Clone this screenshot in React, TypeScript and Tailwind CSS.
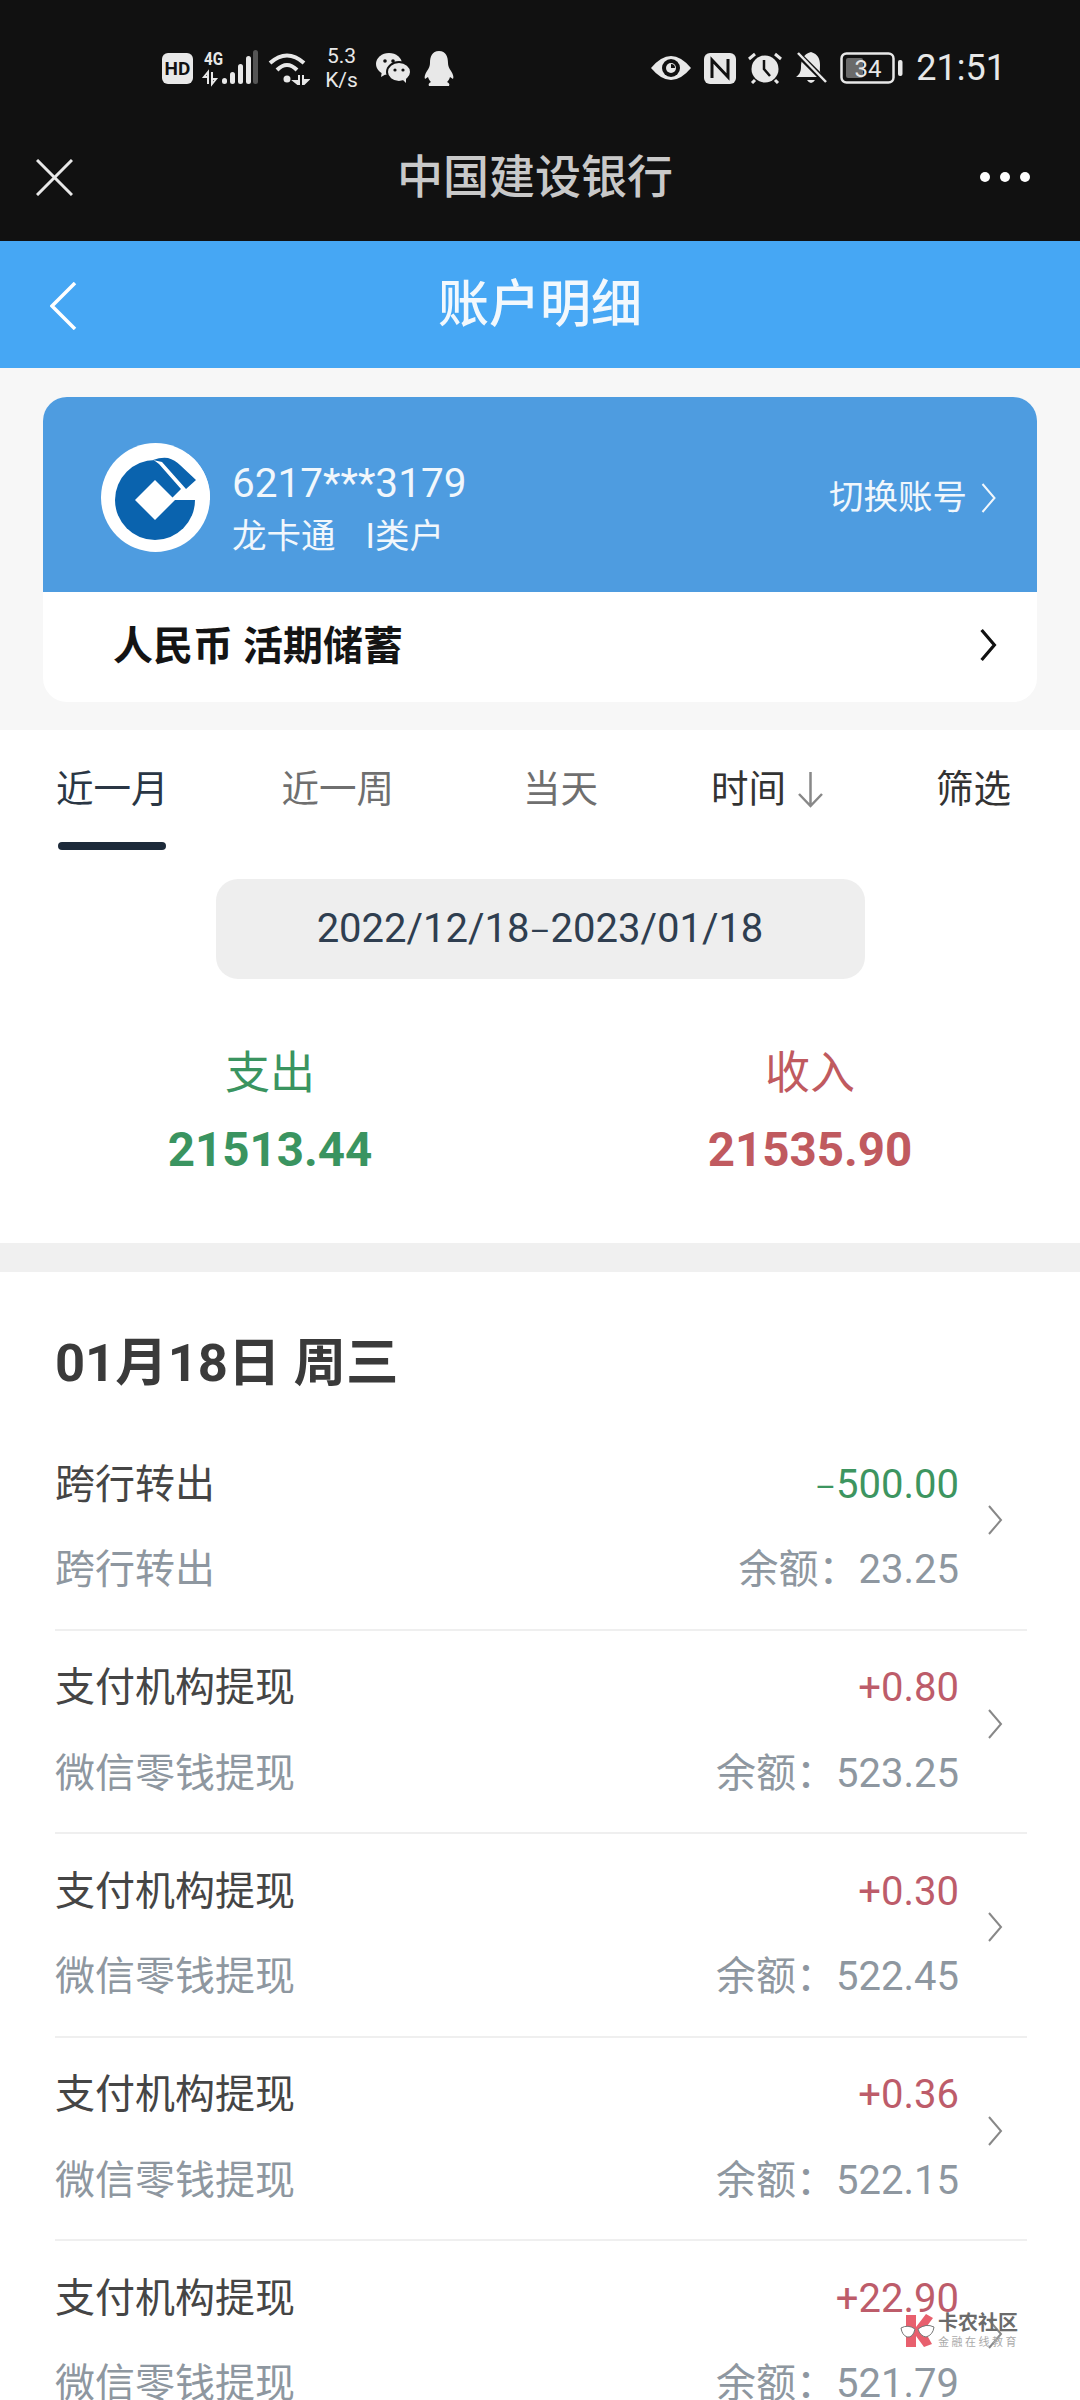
const FONT = "font-['Roboto','Noto_Sans_CJK_SC',sans-serif]"

type Row = { title: string; sub: string; amount: string; balance: string; out?: boolean }

const ROWS: Row[] = [
  { title: '跨行转出', sub: '跨行转出', amount: '500.00', balance: '23.25', out: true },
  { title: '支付机构提现', sub: '微信零钱提现', amount: '+0.80', balance: '523.25' },
  { title: '支付机构提现', sub: '微信零钱提现', amount: '+0.30', balance: '522.45' },
  { title: '支付机构提现', sub: '微信零钱提现', amount: '+0.36', balance: '522.15' },
  { title: '支付机构提现', sub: '微信零钱提现', amount: '+22.90', balance: '521.79' },
]

function Chevron({ className, stroke = '#888', width = 2 }: { className: string; stroke?: string; width?: number }) {
  return (
    <svg className={className} viewBox="0 0 16 30" fill="none">
      <path d="M2 1 L14 15 L2 29" stroke={stroke} strokeWidth={width} />
    </svg>
  )
}

function CcbLogo() {
  return (
    <svg className="w-[109px] h-[109px] shrink-0 mt-[6px]" viewBox="0 0 109 109">
      <defs>
        <clipPath id="ccb">
          <circle cx="54.5" cy="54.5" r="54.5" />
        </clipPath>
      </defs>
      <circle cx="54.5" cy="54.5" r="54.5" fill="#fff" />
      <circle cx="54" cy="57" r="40" fill="#0a63ae" />
      <path d="M46 12 L58 21 L80 46 L69 57 L110 57 L110 10 Z" fill="#fff" clipPath="url(#ccb)" />
      <path d="M52 17 Q60 14 67 15 Q74 17 79 22 L95 37 L85 46 L61 19 Z" fill="#0a63ae" />
      <path d="M54 37 L74 57 L54 77 L34 57 Z" fill="#fff" />
    </svg>
  )
}

function StatusLeft() {
  return (
    <div className="flex items-center text-[#e8e8e8]">
      <svg className="w-[31px] h-[31px]" viewBox="0 0 31 31">
        <rect width="31" height="31" rx="6" fill="#e8e8e8" />
        <text x="15.5" y="22" textAnchor="middle" fontSize="19" fontWeight="700" fontFamily="Roboto" fill="#111">HD</text>
      </svg>
      <svg className="w-[54px] h-[36px] ml-[11px] overflow-visible" viewBox="0 0 54 36" fill="#e8e8e8">
        <text x="0" y="15" fontSize="18" fontWeight="700" fontFamily="Roboto" textLength="19" lengthAdjust="spacingAndGlyphs">4G</text>
        <path d="M4 34 V22 L0 27 H3 M8 22 V34 L12 29 H9" stroke="#e8e8e8" strokeWidth="2" fill="none" />
        <rect x="18" y="28" width="5" height="6" rx="2.5" />
        <rect x="26" y="22" width="5" height="12" rx="2.5" />
        <rect x="34" y="14" width="5" height="20" rx="2.5" />
        <rect x="42" y="6" width="5" height="28" rx="2.5" />
        <rect x="49" y="0" width="5" height="34" rx="2.5" fill="#555" />
      </svg>
      <svg className="w-[42px] h-[34px] ml-[10px]" viewBox="0 0 42 34" fill="none" stroke="#e8e8e8" strokeWidth="4">
        <path d="M2 12 Q19 -3 36 12" />
        <path d="M9 19 Q19 9 29 19" />
        <circle cx="19" cy="28" r="3.5" fill="#e8e8e8" stroke="none" />
        <path d="M31 24 V34 L26 30 H31 M35 24 V34 L40 29 H35" strokeWidth="2" fill="#e8e8e8" />
      </svg>
      <div className="ml-[13px] w-[37px] flex flex-col items-center text-[21px] leading-[24px]">
        <span>5.3</span>
        <span>K/s</span>
      </div>
      <svg className="w-[34px] h-[30px] ml-[16px]" viewBox="0 0 34 30">
        <ellipse cx="13" cy="11" rx="13" ry="11" fill="#e8e8e8" />
        <path d="M6 18 L5 24 L12 20 Z" fill="#e8e8e8" />
        <circle cx="9" cy="8" r="1.8" fill="#111" />
        <circle cx="17" cy="8" r="1.8" fill="#111" />
        <ellipse cx="23" cy="19" rx="12" ry="10" fill="#e8e8e8" stroke="#111" strokeWidth="2" />
        <path d="M27 27 L30 30 L30 25 Z" fill="#e8e8e8" />
        <circle cx="19" cy="17" r="1.6" fill="#111" />
        <circle cx="27" cy="17" r="1.6" fill="#111" />
      </svg>
      <svg className="w-[30px] h-[35px] ml-[14px]" viewBox="0 0 30 35" fill="#e8e8e8">
        <path d="M15 0 C8 0 6 6 6 12 C6 15 5 17 3 20 C1 23 0 26 1 28 L4 26 C5 29 6 30 7 31 C5 32 4 33 5 35 H25 C26 33 25 32 23 31 C24 30 25 29 26 26 L29 28 C30 26 29 23 27 20 C25 17 24 15 24 12 C24 6 22 0 15 0 Z" />
      </svg>
    </div>
  )
}

function StatusRight() {
  return (
    <div className="flex items-center text-[#e8e8e8]">
      <svg className="w-[42px] h-[28px]" viewBox="0 0 42 28">
        <path d="M1 14 Q21 -10 41 14 Q21 38 1 14 Z" fill="#e8e8e8" />
        <circle cx="21" cy="14" r="9" fill="#111" />
        <circle cx="21" cy="14" r="5" fill="#e8e8e8" />
        <path d="M21 10 a4 4 0 0 1 4 4 h-4 Z" fill="#111" />
      </svg>
      <svg className="w-[32px] h-[31px] ml-[12px]" viewBox="0 0 32 31">
        <rect width="32" height="31" rx="6" fill="#e8e8e8" />
        <path d="M8 25 V7 L24 24 V6" fill="none" stroke="#111" strokeWidth="3" />
      </svg>
      <svg className="w-[36px] h-[32px] ml-[11px]" viewBox="0 0 36 32">
        <circle cx="18" cy="17" r="13.5" fill="#e8e8e8" />
        <path d="M17 8 V17 L23 24" fill="none" stroke="#111" strokeWidth="2.5" />
        <path d="M2 7 L8 2 M34 7 L28 2 M8 28 L5 31 M28 28 L31 31" stroke="#e8e8e8" strokeWidth="3" />
      </svg>
      <svg className="w-[33px] h-[34px] ml-[12px]" viewBox="0 0 33 34">
        <path d="M16 1 C8 3 6 10 6 16 C6 21 4 24 1 26 H28 C24 22 25 18 25 14 C25 8 23 3 16 1 Z" fill="#e8e8e8" />
        <path d="M12 29 H20 Q16 35 12 29 Z" fill="#e8e8e8" />
        <path d="M3 3 L30 30" stroke="#111" strokeWidth="6" />
        <path d="M3 2 L31 31" stroke="#e8e8e8" strokeWidth="2.5" />
      </svg>
      <svg className="w-[63px] h-[32px] ml-[12px]" viewBox="0 0 63 32">
        <rect x="1.5" y="1.5" width="52" height="29" rx="5" fill="none" stroke="#e8e8e8" strokeWidth="2.5" />
        <rect x="6" y="6" width="17" height="20" rx="2" fill="#6a6a6a" />
        <text x="28" y="25" textAnchor="middle" fontSize="24" fontFamily="Roboto" fill="#e8e8e8">34</text>
        <rect x="58" y="8" width="4.5" height="16" rx="2" fill="#e8e8e8" />
      </svg>
      <span className="ml-[13px] text-[36px] leading-none">21:51</span>
    </div>
  )
}

function TxRow({ row }: { row: Row }) {
  return (
    <div className="relative h-[203.5px] mr-[53px] border-b-2 border-[#efefef] last:border-b-0">
      <div className="flex justify-between items-center pr-[68px] pt-[37px] h-[78px]">
        <span className="text-[40px] leading-none text-[#454545]">{row.title}</span>
        <span className={`text-[40px] leading-none ${row.out ? 'text-[#3d9560]' : 'text-[#bd5c6a]'}`}>
          {row.out && <span className="text-[32px]">–</span>}
          {row.amount}
        </span>
      </div>
      <div className="flex justify-between items-center pr-[68px] pt-[46px] h-[84px] text-[#8e97a0]">
        <span className="text-[40px] leading-none">{row.sub}</span>
        <span className="text-[40px] leading-none">余额：{row.balance}</span>
      </div>
      <Chevron className="absolute right-[24px] top-[78px] w-[16px] h-[30px]" />
    </div>
  )
}

export default function App() {
  return (
    <div className={`relative w-[1080px] h-[2400px] overflow-hidden bg-white ${FONT}`}>
      <div className="bg-[#111111] h-[241px]">
        <div className="flex items-center justify-between h-[136px] pl-[162px] pr-[74px]">
          <StatusLeft />
          <StatusRight />
        </div>
        <div className="relative flex items-center justify-center h-[82px] pr-[10px]">
          <svg className="absolute left-[36px] top-[23px] w-[37px] h-[37px]" viewBox="0 0 37 37">
            <path d="M1 1 L36 36 M36 1 L1 36" stroke="#e8e8e8" strokeWidth="3" />
          </svg>
          <span className="text-[46px] leading-none font-medium text-[#c9c9c9]">中国建设银行</span>
          <div className="absolute right-[50px] top-[36px] flex gap-[10px]">
            <span className="w-[10px] h-[10px] rounded-full bg-white" />
            <span className="w-[10px] h-[10px] rounded-full bg-white" />
            <span className="w-[10px] h-[10px] rounded-full bg-white" />
          </div>
        </div>
      </div>

      <div className="relative flex items-center justify-center h-[127px] bg-[#46a7f4]">
        <svg className="absolute left-[50px] top-[41px] w-[27px] h-[48px]" viewBox="0 0 27 48" fill="none">
          <path d="M25 1 L2 24 L25 47" stroke="#fff" strokeWidth="3.5" />
        </svg>
        <span className="text-[51px] leading-none font-medium text-[#f2f8fd]">账户明细</span>
      </div>

      <div className="h-[362px] bg-[#f7f7f7] pt-[29px] px-[43px]">
        <div className="rounded-[24px] overflow-hidden bg-white">
          <div className="flex items-center h-[195px] bg-[#4e9ce0] pl-[58px] pr-[40px]">
            <CcbLogo />
            <div className="ml-[22px] mt-[25px] flex flex-col text-[#f1f7fc]">
              <span className="text-[40.5px] leading-[48px]">6217***3179</span>
              <span className="text-[34.5px] leading-[40px] mt-[9px]">
                龙卡通<span className="ml-[30px]">I类户</span>
              </span>
            </div>
            <div className="ml-auto mt-[6px] flex items-center gap-[13px] text-[#f1f7fc]">
              <span className="text-[34.5px] leading-none">切换账号</span>
              <Chevron className="w-[17px] h-[30px]" stroke="#f1f7fc" />
            </div>
          </div>
          <div className="flex items-center justify-between h-[110px] pl-[70px] pr-[40px]">
            <span className="text-[40px] leading-none font-bold text-[#141414]">人民币 活期储蓄</span>
            <Chevron className="w-[18px] h-[32px] -mt-[5px]" stroke="#111" width={3} />
          </div>
        </div>
      </div>

      <div className="relative h-[513px]">
        <div className="flex items-center h-[119px] pl-[56px] text-[37.5px] leading-none">
          <span className="text-[#2a3644]">近一月</span>
          <span className="ml-[113px] text-[#6f6f6f]">近一周</span>
          <span className="ml-[129px] text-[#6f6f6f]">当天</span>
          <span className="ml-[113px] text-[#333]">时间</span>
          <svg className="ml-[11px] w-[27px] h-[36px]" viewBox="0 0 27 36" fill="none">
            <path d="M13.5 0 V34 M2 22 L13.5 34 L25 22" stroke="#888" strokeWidth="2.5" />
          </svg>
          <span className="ml-[112px] text-[#333]">筛选</span>
        </div>
        <div className="ml-[58px] w-[108px] h-[8px] -mt-[7px] rounded-full bg-[#1d2a3a]" />
        <div className="mx-auto mt-[29px] flex items-center justify-center w-[649px] h-[100px] rounded-[22px] bg-[#eeeeee] text-[40px] leading-none text-[#2f3e50]">
          <span>
            2022/12/18<span className="text-[32px]">–</span>2023/01/18
          </span>
        </div>
        <div className="grid grid-cols-2 mt-[65px] text-center">
          <div className="flex flex-col items-center text-[#3a9460]">
            <span className="text-[45px] leading-[60px]">支出</span>
            <span className="text-[47.5px] leading-[60px] mt-[16px] font-bold">21513.44</span>
          </div>
          <div className="flex flex-col items-center text-[#c05a5f]">
            <span className="text-[45px] leading-[60px]">收入</span>
            <span className="text-[47.5px] leading-[60px] mt-[16px] font-bold">21535.90</span>
          </div>
        </div>
      </div>

      <div className="h-[29px] bg-[#f0f0f0]" />

      <div className="pl-[55px]">
        <div className="flex items-center h-[155px] pt-[28px] text-[52.5px] leading-none font-bold text-[#3a3a3a]">01月18日 周三</div>
        {ROWS.map((row, i) => (
          <TxRow key={i} row={row} />
        ))}
      </div>

      {/* 水印 */}
      <div className="absolute left-[900px] top-[2313px] flex items-center">
        <svg className="w-[36px] h-[34px]" viewBox="0 0 36 34">
          <path d="M6 1 H16 V13 L26 0 L33 4 L24 16 L32 30 L24 33 L16 22 V33 H6 Z" fill="#e8606e" />
          <path d="M1 14 Q8 10 15 15 Q13 24 7 23 Q2 21 1 14 Z M18 15 Q26 9 34 13 Q33 21 26 23 Q20 22 18 15 Z" fill="#fff" stroke="#777" strokeWidth="1" />
        </svg>
        <div className="ml-[2px] flex flex-col leading-none">
          <span className="text-[20px] font-bold text-[#6b6b6b]">卡农社区</span>
          <span className="mt-[4px] text-[11px] tracking-[2.5px] text-[#aaa]">金融在线教育</span>
        </div>
      </div>
    </div>
  )
}
